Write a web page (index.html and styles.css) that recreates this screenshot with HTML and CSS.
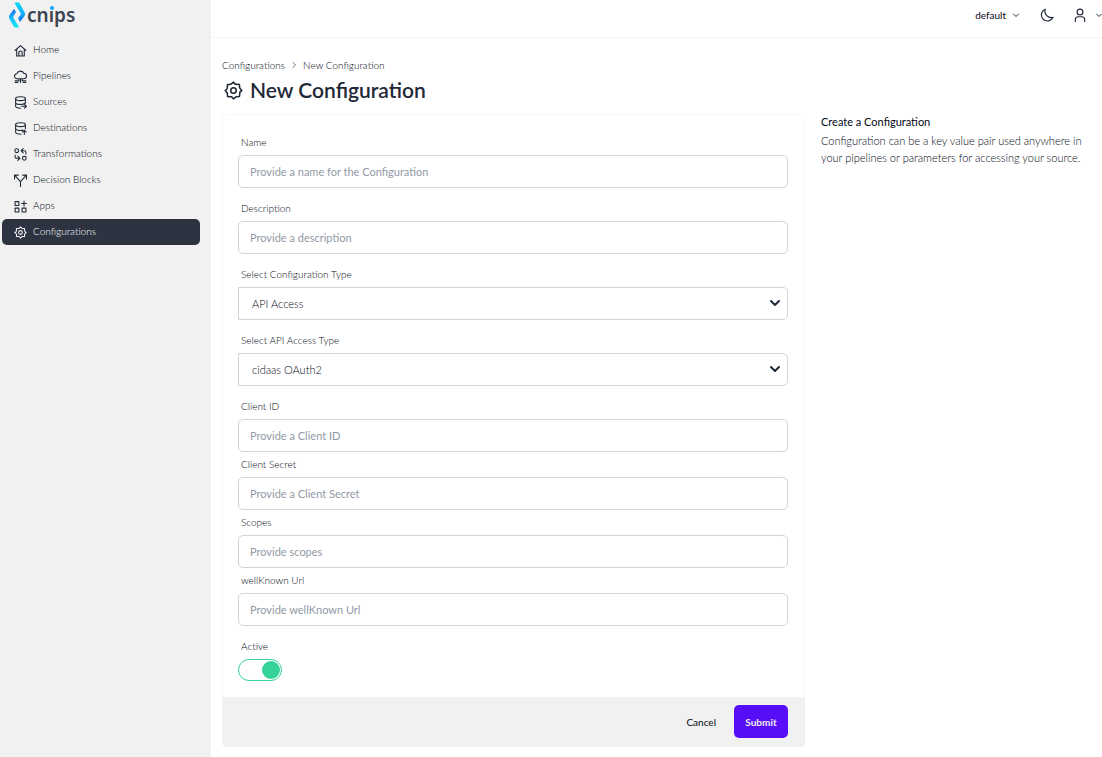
FILE: index.html
```html
<!DOCTYPE html>
<html lang="en">
<head>
<meta charset="utf-8">
<title>New Configuration</title>
<link rel="stylesheet" href="styles.css">
</head>
<body>
<div class="app">
  <aside class="sidebar">
    <a class="logo" href="#" aria-label="cnips home">
      <svg class="logo-mark" viewBox="0 0 18 26" aria-hidden="true">
        <defs>
          <linearGradient id="left" x1="0" y1="0" x2="0" y2="1"><stop offset="0" stop-color="#1769f5"/><stop offset=".45" stop-color="#12b4f8"/><stop offset="1" stop-color="#10f0fa"/></linearGradient>
          <linearGradient id="right" x1="0" y1="0" x2="0" y2="1"><stop offset="0" stop-color="#10dcfa"/><stop offset=".55" stop-color="#12b4f8"/><stop offset="1" stop-color="#1769f5"/></linearGradient>
        </defs>
        <path d="M5 7 7 10 4.500 14Q4 15 4.500 16L10 25Q7 26.500 5 25L.500 17Q-.500 15 .500 13Z" fill="url(#left)"/>
        <path d="M5.500 1Q8-.500 10.500 1L15.500 10Q16.500 12 15.500 14L11 20 9 16 11.500 13Q12 12 11.500 11Z" fill="url(#right)"/>
      </svg>
      <span class="wordmark">cn<span class="logo-i">ı</span>ps</span>
    </a>
    <nav class="nav">
      <a href="#"><svg class="icon" viewBox="0 0 24 24"><path d="M2 12 12 3l10 9M5 10v12h14V10M9 21v-6q0-2 3-2t3 2v6"/></svg>Home</a>
      <a href="#"><svg class="icon" viewBox="0 0 24 24"><path d="M6 16a4.500 4.500 0 0 1-1-9 7 7 0 0 1 13-1 5 5 0 0 1 0 10ZM9 16v4H2M12 16v7M15 16v4h7M2 23h5M17 23h5"/></svg>Pipelines</a>
      <a href="#"><svg class="icon" viewBox="0 0 24 24"><ellipse cx="12" cy="5" rx="9" ry="3.500"/><path d="M3 5v14c0 2 4 3.500 9 3.500M21 5v8M3 12c0 4 13 5 18 1M14 19h9M19.500 15.500l3.500 3.500-3.500 3.500"/></svg>Sources</a>
      <a href="#"><svg class="icon" viewBox="0 0 24 24"><ellipse cx="12" cy="5" rx="9" ry="3.500"/><path d="M3 5v14c0 2 4 3.500 10 3.500M21 5v7M3 12c0 3 7 4.500 13 3M19 23v-8M15.500 18.500 19 15l3.500 3.500"/></svg>Destinations</a>
      <a href="#"><svg class="icon" viewBox="0 0 24 24"><circle cx="5" cy="5" r="3.500"/><circle cx="19" cy="19" r="3.500"/><path d="M22 11V8q0-3-3-3h-5M17 1l-4 4 4 4M2 13v3q0 3 3 3h5M7 15l4 4-4 4"/></svg>Transformations</a>
      <a href="#"><svg class="icon" viewBox="0 0 24 24"><path d="M12 23v-9L2 3M12 14 22 3M1 9V2h7M16 2h7v7"/></svg>Decision Blocks</a>
      <a href="#"><svg class="icon" viewBox="0 0 24 24"><rect x="2" y="3" width="7" height="7"/><rect x="2" y="15" width="7" height="7"/><rect x="15" y="15" width="7" height="7"/><path d="M18.500 2v9M14 6.500h9"/></svg>Apps</a>
      <a class="active" href="#" aria-current="page"><svg class="icon" viewBox="0 0 24 24"><path d="M12 1.500Q14 4.500 15 4.500T19.500 4.500Q19 8 19.500 9T22.500 12Q19.500 14 19.500 15T19.500 19.500Q16 19 15 19.500T12 22.500Q10 19.500 9 19.500T4.500 19.500Q5 16 4.500 15T1.500 12Q4.500 10 4.500 9T4.500 4.500Q8 5 9 4.500T12 1.500Z"/><circle cx="12" cy="12" r="3.500"/></svg>Configurations</a>
    </nav>
  </aside>
  <div class="page">
    <header class="topbar">
      <button class="tenant" type="button">default <svg class="chevron" viewBox="0 0 8 8"><path d="M1.500 3 4 5.500 6.500 3"/></svg></button>
      <button class="theme" type="button" aria-label="Dark mode"><svg class="icon" viewBox="0 0 24 24"><path d="M9 2a10.500 10.500 0 1 0 13.500 14A11 11 0 0 1 9 2Z"/></svg></button>
      <button class="account" type="button" aria-label="Account"><svg class="icon" viewBox="0 0 24 24"><circle cx="12" cy="7" r="5"/><path d="M4 23v-3q0-5 5-5h6q5 0 5 5v3"/></svg><svg class="chevron" viewBox="0 0 8 8"><path d="M1.500 3 4 5.500 6.500 3"/></svg></button>
    </header>
    <main class="content">
      <nav class="crumbs" aria-label="Breadcrumb"><a href="#">Configurations</a><svg class="chevron" viewBox="0 0 8 8"><path d="M3 1.500 5.500 4 3 6.500"/></svg><a href="#">New Configuration</a></nav>
      <h1 class="title"><svg class="icon" viewBox="0 0 24 24"><path d="M12 1.500Q14 4.500 15.500 4.200T19.500 4.500Q19.500 7.500 19.800 8.500T22.500 12Q19.500 14 19.800 15.500T19.500 19.500Q16.500 19.500 15.500 19.800T12 22.500Q10 19.500 8.500 19.800T4.500 19.500Q4.500 16.500 4.200 15.500T1.500 12Q4.500 10 4.200 8.500T4.500 4.500Q7.500 4.500 8.500 4.200T12 1.500Z"/><circle cx="12" cy="12" r="3.500"/></svg>New Configuration</h1>
      <div class="columns">
        <form class="card">
          <div class="fields">
            <div class="field"><label for="name">Name</label><input id="name" type="text" placeholder="Provide a name for the Configuration"></div>
            <div class="field"><label for="description">Description</label><input id="description" type="text" placeholder="Provide a description"></div>
            <div class="field"><label for="type">Select Configuration Type</label><div class="select"><select id="type"><option>API Access</option></select><svg viewBox="0 0 12 8"><path d="M2 2 6 6 10 2"/></svg></div></div>
            <div class="field"><label for="access">Select API Access Type</label><div class="select"><select id="access"><option>cidaas OAuth2</option></select><svg viewBox="0 0 12 8"><path d="M2 2 6 6 10 2"/></svg></div></div>
            <div class="group">
              <div class="field"><label for="client">Client ID</label><input id="client" type="text" placeholder="Provide a Client ID"></div>
              <div class="field"><label for="secret">Client Secret</label><input id="secret" type="text" placeholder="Provide a Client Secret"></div>
              <div class="field"><label for="scopes">Scopes</label><input id="scopes" type="text" placeholder="Provide scopes"></div>
              <div class="field"><label for="url">wellKnown Url</label><input id="url" type="text" placeholder="Provide wellKnown Url"></div>
            </div>
            <div class="field"><label for="enabled">Active</label><input class="toggle" id="enabled" type="checkbox" role="switch" checked></div>
          </div>
          <div class="actions"><button class="cancel" type="button">Cancel</button><button class="submit" type="submit">Submit</button></div>
        </form>
        <section class="help"><h2>Create a Configuration</h2><p>Configuration can be a key value pair used anywhere in your pipelines or parameters for accessing your source.</p></section>
      </div>
    </main>
  </div>
</div>
</body>
</html>
```
FILE: styles.css
```css
* { box-sizing: border-box; }
body { margin: 0; background: #fff; color: #030914; font: 300 10px/16px Lato, sans-serif; }
a { color: inherit; text-decoration: none; }
button, input, select { font: inherit; color: inherit; }
button { border: 0; padding: 0; background: none; cursor: pointer; }
svg { fill: none; stroke: #1f2937; stroke-width: 2; stroke-linecap: round; stroke-linejoin: round; flex: none; }
.app { display: flex; min-height: 100vh; }
.sidebar { flex: 0 0 211px; background: #f1f1f1; }
.logo { display: flex; align-items: center; height: 36px; padding: 0 0 7px 9px; }
.logo-mark { width: 18px; height: 26px; stroke: none; }
.wordmark { font: 600 19px/26px "Noto Sans", sans-serif; color: #3b4350; }
.logo-i { position: relative; }
.logo-i::before { content: ""; position: absolute; top: 4px; left: 1px; width: 4px; height: 4px; border-radius: 50%; background: #12a4f8; }
.nav { padding: 0 11px 0 2px; }
.nav a { display: flex; align-items: center; gap: 6px; height: 26px; padding: 0 0 1px 12px; border-radius: 5px; }
.nav .icon { width: 13px; height: 13px; margin-top: 3px; }
.nav .active { height: 26px; margin-top: 1px; padding-bottom: 2px; background: #2d3340; color: #fff; }
.nav .active .icon { stroke: #f1f1f1; }
.page { flex: 1; min-width: 0; }
.topbar { display: flex; align-items: center; justify-content: flex-end; height: 38px; padding-bottom: 8px; border-bottom: 1px solid #f3f3f3; }
.topbar button { display: flex; align-items: center; }
.topbar .icon { width: 14px; height: 14px; margin-top: 1px; }
.chevron { width: 8px; height: 8px; stroke-width: 1; }
.tenant { gap: 6px; font-weight: 400; }
.theme { margin: 0 19px 0 20px; }
.account { gap: 8px; margin-right: -1px; }
.content { padding: 19px 0 10px 11px; }
.crumbs { display: flex; align-items: center; gap: 5px; }
.crumbs .chevron { stroke: #6b7280; }
.title { display: flex; align-items: center; gap: 7px; margin: 4px 0 11px 2px; color: #1f2937; font-size: 21px; line-height: 26px; font-weight: 600; }
.title .icon { width: 19px; height: 19px; }
.columns { display: grid; grid-template-columns: minmax(0, 583fr) minmax(0, 281fr); gap: 16px; align-items: start; }
.card { border-radius: 5px; overflow: hidden; box-shadow: inset 0 0 0 1px #f7f7f7; }
.fields { display: grid; gap: 12px; padding: 20px 17px 16px 16px; }
.group { display: grid; gap: 4px; }
.field { display: grid; gap: 5px; }
.field label { padding-left: 3px; }
.field input, .field select { width: 100%; height: 33px; padding: 0 11px; border: 1px solid #d1d3d6; border-radius: 5px; background: #fff; font-size: 11px; outline: 0; }
.field input::placeholder { color: #9299a6; opacity: 1; font-weight: 400; }
.select { display: grid; position: relative; }
.field select { appearance: none; padding-left: 13px; border-radius: 0 5px 5px 0; }
.select svg { position: absolute; right: 7px; top: 12px; width: 12px; height: 8px; pointer-events: none; }
.field .toggle { appearance: none; display: flex; align-items: center; justify-content: flex-end; width: 44px; height: 22px; margin: 0; padding: 0 1px; border-color: #36d399; border-radius: 11px; }
.toggle::before { content: ""; width: 18px; height: 18px; border-radius: 50%; background: #36d399; }
.field .toggle:not(:checked) { justify-content: flex-start; }
.actions { display: flex; justify-content: flex-end; gap: 18px; padding: 8px 17px 9px; background: #f1f1f1; }
.cancel { font-weight: 400; }
.submit { width: 54px; height: 33px; border-radius: 5px; background: #570df8; color: #eee; font-weight: 700; }
.help { margin-top: -1px; font-size: 11px; line-height: 17px; }
.help h2 { margin: 0 0 2px; font-size: 11px; font-weight: 400; }
.help p { margin: 0; }
```
